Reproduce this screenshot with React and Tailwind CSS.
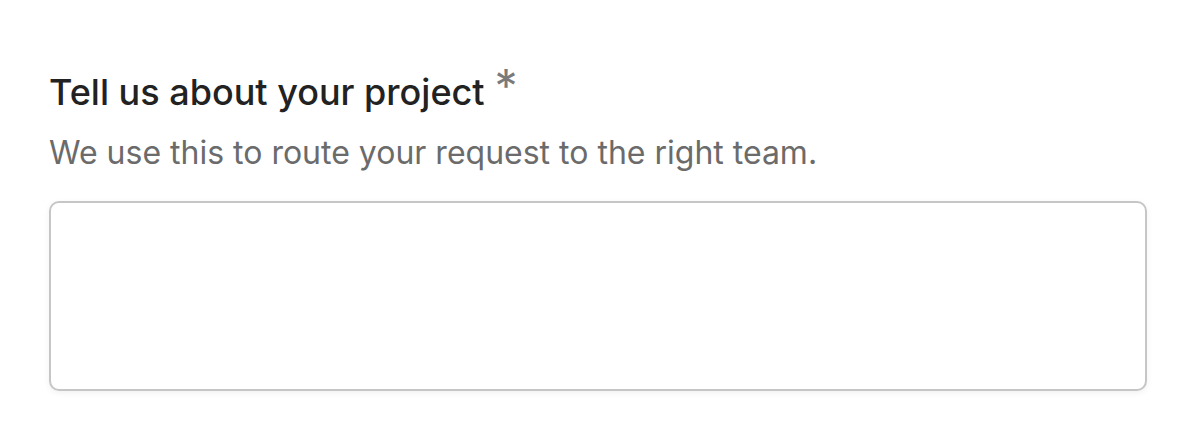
import React from 'react';

const App = () => {
  return (
    <div className="min-h-screen w-full bg-white" style={{ fontFamily: 'Inter, "Noto Sans", sans-serif' }}>
      <div className="pt-[70px] pl-[49px] pr-[49px]">
        <label className="flex items-start text-[36px] leading-[44px] font-medium text-[#222222]">
          Tell us about your project
          <span className="ml-[10px] -mt-[7px] text-[46px] leading-[46px] font-normal text-[#7a7a7a]">*</span>
        </label>
        <p className="mt-[19px] text-[32px] leading-[40px] text-[#6b6b6b]">
          We use this to route your request to the right team.
        </p>
        <textarea
          className="mt-[28px] block h-[190px] w-full resize-none rounded-[10px] border-2 border-[#c6c6c6] bg-white shadow-[0_2px_6px_rgba(0,0,0,0.06)] outline-none"
        />
      </div>
    </div>
  );
};

export default App;
